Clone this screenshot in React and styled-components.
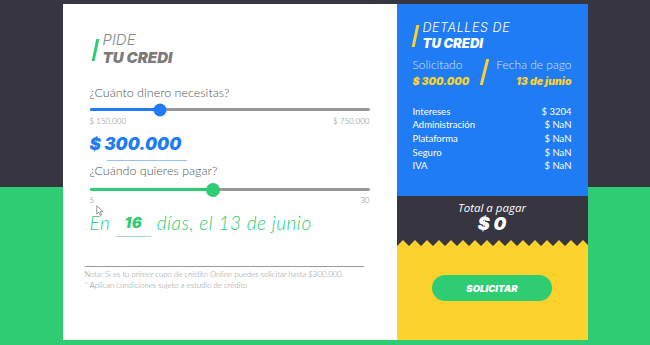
import React from "react";
import styled, { createGlobalStyle } from "styled-components";

const GlobalStyle = createGlobalStyle`
  html, body {
    margin: 0;
    padding: 0;
  }
  body {
    font-family: Lato, "Noto Sans", sans-serif;
  }
`;

const DARK = "#37353f";
const GREEN = "#2ecd74";
const BLUE = "#1f7cf4";
const YELLOW = "#fdd22c";

const money = {
  min: 150000,
  max: 750000,
  value: 300000,
};
const days = { min: 5, max: 30, value: 16 };

const rows = [
  ["Intereses", "$ 3204"],
  ["Administración", "$ NaN"],
  ["Plataforma", "$ NaN"],
  ["Seguro", "$ NaN"],
  ["IVA", "$ NaN"],
];

const pct = (r) => ((r.value - r.min) / (r.max - r.min)) * 100;

const Slider = ({ range, color, thumb }) => (
  <Track>
    <Fill $color={color} style={{ width: `${pct(range)}%` }} />
    <Thumb $color={color} $size={thumb} style={{ left: `${pct(range)}%` }} />
  </Track>
);

const zigzag = () => {
  let pts = "0,0 ";
  for (let x = 0; x <= 196; x += 12) {
    pts += `${x},6 ${x + 6},0 `;
  }
  pts += "196,0";
  return pts;
};

export default function App() {
  return (
    <>
      <GlobalStyle />
      <Page>
        <Card>
          <Title $indent={4}>
            <TitleBar $color={GREEN} />
            <div>
              <TitleLight $color="#8a8a8a" $size={15}>
                PIDE
              </TitleLight>
              <TitleBold $color="#7b7b7b" $size={15}>
                TU CREDI
              </TitleBold>
            </div>
          </Title>

          <Question $top={20}>¿Cuánto dinero necesitas?</Question>
          <SliderWrap $top={8}>
            <Slider range={money} color={BLUE} thumb={13} />
          </SliderWrap>
          <Limits>
            <span>$ 150.000</span>
            <span>$ 750.000</span>
          </Limits>
          <Amount>
            $ 300.000
            <AmountLine />
          </Amount>

          <Question $top={3}>¿Cuándo quieres pagar?</Question>
          <SliderWrap $top={10}>
            <Slider range={days} color={GREEN} thumb={14} />
          </SliderWrap>
          <Limits $top={4}>
            <span>5</span>
            <span>30</span>
          </Limits>
          <Cursor viewBox="0 0 12 16">
            <path
              d="M1 1 L1 12 L3.8 9.6 L5.8 14.2 L7.6 13.4 L5.6 8.9 L9.4 8.9 Z"
              fill="#fff"
              stroke="#666"
              strokeWidth="0.9"
              strokeLinejoin="round"
            />
          </Cursor>
          <DaysLine>
            En <DaysNum>16</DaysNum> días, el 13 de junio
          </DaysLine>

          <Note>
            <p>
              Nota: Si es tu primer cupo de crédito Online puedes solicitar hasta
              $300.000.
            </p>
            <p>* Aplican condiciones sujeto a estudio de crédito</p>
          </Note>
        </Card>

        <Panel>
          <BlueBox>
            <Title $indent={1}>
              <TitleBar $color={YELLOW} />
              <div>
                <TitleLight $color="#fff" $size={12.5} $spacing>
                  DETALLES DE
                </TitleLight>
                <TitleBold $color="#fff" $size={13}>
                  TU CREDI
                </TitleBold>
              </div>
            </Title>

            <Summary>
              <SummaryCol>
                <SummaryLabel>Solicitado</SummaryLabel>
                <SummaryValue>$ 300.000</SummaryValue>
              </SummaryCol>
              <Slash />
              <SummaryCol $right>
                <SummaryLabel>Fecha de pago</SummaryLabel>
                <SummaryValue>13 de junio</SummaryValue>
              </SummaryCol>
            </Summary>

            <Rows>
              {rows.map(([k, v]) => (
                <Row key={k}>
                  <span>{k}</span>
                  <span>{v}</span>
                </Row>
              ))}
            </Rows>
          </BlueBox>

          <TotalBox>
            <TotalLabel>Total a pagar</TotalLabel>
            <TotalValue>$ 0</TotalValue>
          </TotalBox>

          <YellowBox>
            <Zigzag viewBox="0 0 191 6" preserveAspectRatio="none">
              <polygon points={zigzag()} fill={DARK} />
            </Zigzag>
            <Button>SOLICITAR</Button>
          </YellowBox>
        </Panel>
      </Page>
    </>
  );
}

const Page = styled.div`
  width: 650px;
  height: 345px;
  overflow: hidden;
  display: flex;
  justify-content: center;
  padding-top: 4px;
  box-sizing: border-box;
  background: linear-gradient(to bottom, ${DARK} 187px, ${GREEN} 187px);
`;

const Card = styled.div`
  width: 334px;
  height: 336px;
  background: #fff;
  box-sizing: border-box;
  padding: 27px 27px 0 27px;
  position: relative;
`;

const Title = styled.div`
  display: flex;
  align-items: center;
  gap: 6px;
  margin-left: ${(p) => p.$indent}px;
`;

const TitleBar = styled.div`
  width: 3px;
  height: 22px;
  background: ${(p) => p.$color};
  transform: skewX(-12deg);
  margin-top: 2px;
`;

const TitleLight = styled.div`
  font-family: Inter, "Noto Sans", sans-serif;
  font-style: italic;
  font-weight: 300;
  font-size: ${(p) => p.$size}px;
  line-height: ${(p) => p.$size + 3}px;
  color: ${(p) => p.$color};
  letter-spacing: ${(p) => (p.$spacing ? "0.6px" : "0")};
`;

const TitleBold = styled.div`
  font-family: Inter, "Noto Sans", sans-serif;
  font-style: italic;
  font-weight: 900;
  font-size: ${(p) => p.$size}px;
  line-height: ${(p) => p.$size + 2}px;
  color: ${(p) => p.$color};
`;

const Question = styled.div`
  margin-top: ${(p) => p.$top}px;
  font-size: 12.5px;
  font-weight: 300;
  color: #555;
  line-height: 14px;
`;

const SliderWrap = styled.div`
  margin-top: ${(p) => p.$top}px;
  width: 280px;
`;

const Track = styled.div`
  position: relative;
  height: 3px;
  background: #999;
  border-radius: 2px;
`;

const Fill = styled.div`
  height: 100%;
  background: ${(p) => p.$color};
  border-radius: 2px;
`;

const Thumb = styled.div`
  position: absolute;
  top: 50%;
  width: ${(p) => p.$size}px;
  height: ${(p) => p.$size}px;
  border-radius: 50%;
  background: ${(p) => p.$color};
  transform: translate(-50%, -50%);
`;

const Limits = styled.div`
  width: 280px;
  display: flex;
  justify-content: space-between;
  font-size: 8px;
  font-weight: 300;
  color: #777;
  line-height: 10px;
  margin-top: ${(p) => p.$top || 5}px;
`;

const Amount = styled.div`
  position: relative;
  display: inline-block;
  margin-top: 8px;
  font-family: Inter, "Noto Sans", sans-serif;
  font-style: italic;
  font-weight: 900;
  font-size: 17px;
  line-height: 20px;
  color: ${BLUE};
  padding-bottom: 7px;
`;

const AmountLine = styled.div`
  position: absolute;
  left: 17px;
  right: -6px;
  bottom: 0;
  height: 1px;
  background: #9cc0f5;
`;

const Cursor = styled.svg`
  position: absolute;
  left: 33px;
  top: 201px;
  width: 9px;
  height: 12px;
`;

const DaysLine = styled.div`
  margin-top: 6px;
  font-size: 19px;
  font-weight: 300;
  font-style: italic;
  color: ${GREEN};
  letter-spacing: 0.5px;
  line-height: 23px;
`;

const DaysNum = styled.span`
  display: inline-block;
  font-family: Inter, "Noto Sans", sans-serif;
  font-weight: 900;
  font-size: 15px;
  padding: 0 9px 4px 9px;
  border-bottom: 1px solid #a8dcc0;
  vertical-align: 2px;
  line-height: 18px;
`;

const Note = styled.div`
  margin: 29px 0 0 -5px;
  width: 279px;
  border-top: 1px solid #999;
  padding-top: 2px;
  font-size: 7.8px;
  font-weight: 300;
  color: #8f8f8f;
  p {
    margin: 0;
    line-height: 10.5px;
    white-space: nowrap;
  }
`;

const Panel = styled.div`
  width: 191px;
  height: 336px;
  display: flex;
  flex-direction: column;
`;

const BlueBox = styled.div`
  background: ${BLUE};
  height: 192px;
  box-sizing: border-box;
  padding: 16px 16px 0 16px;
`;

const Summary = styled.div`
  display: flex;
  align-items: center;
  justify-content: space-between;
  margin-top: 6px;
`;

const SummaryCol = styled.div`
  display: flex;
  flex-direction: column;
  align-items: ${(p) => (p.$right ? "flex-end" : "flex-start")};
  gap: 3px;
`;

const SummaryLabel = styled.div`
  font-size: 12px;
  color: #d6e4ff;
  font-weight: 300;
`;

const SummaryValue = styled.div`
  font-family: Inter, "Noto Sans", sans-serif;
  font-style: italic;
  font-weight: 900;
  font-size: 10.5px;
  color: ${YELLOW};
`;

const Slash = styled.div`
  width: 3px;
  height: 26px;
  background: ${YELLOW};
  transform: skewX(-14deg);
  margin-left: 4px;
`;

const Rows = styled.div`
  margin-top: 18px;
  display: flex;
  flex-direction: column;
  gap: 2px;
`;

const Row = styled.div`
  display: flex;
  justify-content: space-between;
  font-size: 9.5px;
  color: #fff;
  line-height: 11.7px;
`;

const TotalBox = styled.div`
  background: ${DARK};
  height: 44px;
  display: flex;
  flex-direction: column;
  align-items: center;
  padding-top: 5px;
  box-sizing: border-box;
`;

const TotalLabel = styled.div`
  font-family: "Open Sans", sans-serif;
  font-style: italic;
  font-size: 11.5px;
  color: #fff;
  line-height: 13px;
`;

const TotalValue = styled.div`
  font-family: Inter, "Noto Sans", sans-serif;
  font-style: italic;
  font-weight: 900;
  font-size: 18px;
  color: #fff;
  line-height: 19px;
`;

const YellowBox = styled.div`
  flex: 1;
  background: ${YELLOW};
  display: flex;
  flex-direction: column;
  align-items: center;
`;

const Zigzag = styled.svg`
  display: block;
  width: 100%;
  height: 6px;
`;

const Button = styled.div`
  margin-top: 29px;
  width: 120px;
  height: 26px;
  border-radius: 13px;
  background: ${GREEN};
  display: flex;
  align-items: center;
  justify-content: center;
  font-family: Inter, "Noto Sans", sans-serif;
  font-style: italic;
  font-weight: 900;
  font-size: 9.5px;
  color: #fff;
`;
